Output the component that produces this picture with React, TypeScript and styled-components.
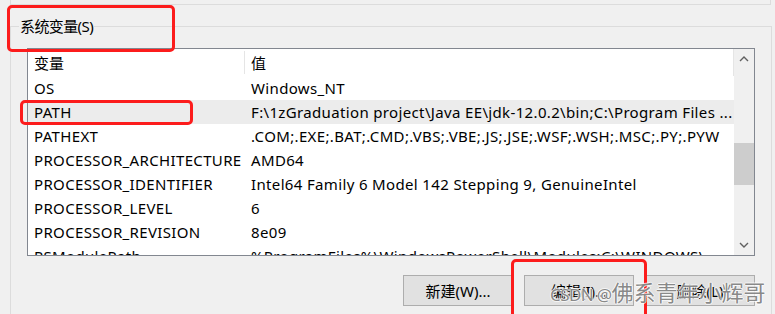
import styled, { createGlobalStyle } from 'styled-components'

const GlobalStyle = createGlobalStyle`
  html, body {
    margin: 0;
    padding: 0;
    background: #f0f0f0;
  }
  body {
    font-family: 'Noto Sans', 'Noto Sans CJK SC', sans-serif;
    font-size: 15px;
    color: #000;
  }
`

const Page = styled.div`
  position: relative;
  width: 775px;
  height: 314px;
  overflow: hidden;
  padding-left: 10px;
  box-sizing: border-box;
  display: flex;
  flex-direction: column;
`

const PrevGroup = styled.div`
  height: 4px;
  margin-right: 4px;
  border-left: 1px solid #dcdcdc;
  border-right: 1px solid #dcdcdc;
  border-bottom: 1px solid #dcdcdc;
`

const Group = styled.div`
  margin-top: 21px;
  margin-right: 3px;
  flex: 1;
  border-top: 1px solid #dcdcdc;
  border-left: 1px solid #dcdcdc;
  border-right: 1px solid #dcdcdc;
  display: flex;
  flex-direction: column;
  padding-left: 16px;
`

const Title = styled.div`
  align-self: flex-start;
  margin: -12px 0 0 -8px;
  padding: 0 1px;
  height: 22px;
  line-height: 22px;
  background: #f0f0f0;
  letter-spacing: -0.6px;
`

const ListView = styled.div`
  margin-top: 11px;
  width: 728px;
  height: 208px;
  box-sizing: border-box;
  border: 1px solid #828790;
  background: #fff;
  display: flex;
  overflow: hidden;
`

const Table = styled.div`
  flex: 1;
  display: flex;
  flex-direction: column;
  overflow: hidden;
`

const Header = styled.div`
  height: 27px;
  flex-shrink: 0;
  display: flex;
  border-right: 1px solid #e5e5e5;
`

const Row = styled.div<{ $selected?: boolean }>`
  height: 24px;
  flex-shrink: 0;
  display: flex;
  align-items: center;
  background: ${p => (p.$selected ? '#ececec' : 'transparent')};
`

const HeadCell = styled.div<{ $w?: number }>`
  width: ${p => (p.$w ? `${p.$w}px` : 'auto')};
  flex: ${p => (p.$w ? 'none' : 1)};
  box-sizing: border-box;
  padding-left: 6px;
  display: flex;
  align-items: center;
  border-right: ${p => (p.$w ? '1px solid #e5e5e5' : 'none')};
  margin: 2px 0;
`

const Cell = styled.div<{ $w?: number }>`
  width: ${p => (p.$w ? `${p.$w}px` : 'auto')};
  flex: ${p => (p.$w ? 'none' : 1)};
  box-sizing: border-box;
  padding-left: 6px;
  white-space: nowrap;
  overflow: hidden;
  letter-spacing: 0.35px;
`

const ScrollBar = styled.div`
  width: 20px;
  background: #f0f0f0;
  display: flex;
  flex-direction: column;
`

const ArrowBtn = styled.div`
  height: 20px;
  display: flex;
  align-items: center;
  justify-content: center;
`

const Track = styled.div`
  flex: 1;
`

const Thumb = styled.div`
  margin-top: 74px;
  height: 42px;
  background: #cdcdcd;
`

const Buttons = styled.div`
  display: flex;
  justify-content: flex-end;
  gap: 11px;
  margin-top: 19px;
  width: 728px;
`

const Button = styled.button`
  width: 110px;
  height: 31px;
  border: 1px solid #adadad;
  background: #e1e1e1;
  font-family: inherit;
  font-size: 15px;
  color: #000;
  padding: 0;
`

const Mark = styled.div<{ $x: number; $y: number; $w: number; $h: number }>`
  position: absolute;
  left: ${p => p.$x}px;
  top: ${p => p.$y}px;
  width: ${p => p.$w}px;
  height: ${p => p.$h}px;
  box-sizing: border-box;
  border: 3px solid #fc1c1c;
  border-radius: 5px;
`

const Watermark = styled.div`
  position: absolute;
  left: 550px;
  top: 278px;
  font-size: 22px;
  line-height: 28px;
  color: rgba(105, 105, 105, 0.8);
  text-shadow:
    1px 0 0 rgba(255, 255, 255, 0.7),
    -1px 0 0 rgba(255, 255, 255, 0.7),
    0 1px 0 rgba(255, 255, 255, 0.7),
    0 -1px 0 rgba(255, 255, 255, 0.7);
  white-space: nowrap;
`

const MarkLatin = styled.span`
  font-size: 17px;
  letter-spacing: -0.6px;
`

const Chevron = ({ down }: { down?: boolean }) => (
  <svg width="10" height="6" viewBox="0 0 10 6">
    <polyline
      points={down ? '1,1 5,5 9,1' : '1,5 5,1 9,5'}
      fill="none"
      stroke="#606060"
      strokeWidth="1.4"
    />
  </svg>
)

const rows: [string, string][] = [
  ['OS', 'Windows_NT'],
  ['PATH', 'F:\\1zGraduation project\\Java EE\\jdk-12.0.2\\bin;C:\\Program Files ...'],
  ['PATHEXT', '.COM;.EXE;.BAT;.CMD;.VBS;.VBE;.JS;.JSE;.WSF;.WSH;.MSC;.PY;.PYW'],
  ['PROCESSOR_ARCHITECTURE', 'AMD64'],
  ['PROCESSOR_IDENTIFIER', 'Intel64 Family 6 Model 142 Stepping 9, GenuineIntel'],
  ['PROCESSOR_LEVEL', '6'],
  ['PROCESSOR_REVISION', '8e09'],
  ['PSModulePath', '%ProgramFiles%\\WindowsPowerShell\\Modules;C:\\WINDOWS\\...'],
]

const App = () => {
  return (
    <Page>
      <GlobalStyle />
      <PrevGroup />
      <Group>
        <Title>系统变量(S)</Title>
        <ListView>
          <Table>
            <Header>
              <HeadCell $w={217}>变量</HeadCell>
              <HeadCell>值</HeadCell>
            </Header>
            {rows.map(([k, v]) => (
              <Row key={k} $selected={k === 'PATH'}>
                <Cell $w={217}>{k}</Cell>
                <Cell>{v}</Cell>
              </Row>
            ))}
          </Table>
          <ScrollBar>
            <ArrowBtn>
              <Chevron />
            </ArrowBtn>
            <Track>
              <Thumb />
            </Track>
            <ArrowBtn>
              <Chevron down />
            </ArrowBtn>
          </ScrollBar>
        </ListView>
        <Buttons>
          <Button>新建(W)...</Button>
          <Button>编辑(I)...</Button>
          <Button>删除(L)</Button>
        </Buttons>
      </Group>
      <Mark $x={7} $y={5} $w={168} $h={47} />
      <Mark $x={20} $y={100} $w={173} $h={25} />
      <Mark $x={511} $y={259} $w={136} $h={70} />
      <Watermark>
        <MarkLatin>CSDN @</MarkLatin>佛系青年小辉哥
      </Watermark>
    </Page>
  )
}

export default App
